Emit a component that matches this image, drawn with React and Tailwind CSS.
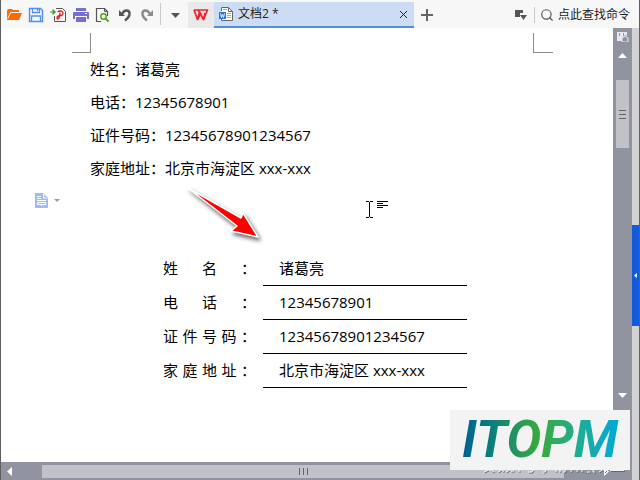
import { Search } from "lucide-react";

const fields = [
  { label: "姓名：", value: "诸葛亮" },
  { label: "电话：", value: "12345678901" },
  { label: "证件号码：", value: "12345678901234567" },
  { label: "家庭地址：", value: "北京市海淀区 xxx-xxx" },
];

const OpenIcon = () => (
  <svg width="16" height="16" viewBox="0 0 16 16" fill="#ff6a00">
    <path d="M1 13V4q0-2 2-2h3l1 1h5q1 0 1 1v1H5L2 10v3z" />
    <path d="M5 6h11l-3 7H1z" />
    <path d="M1.500 12L4.500 5.500h9" fill="none" stroke="#fff" strokeWidth=".6" />
  </svg>
);

const SaveIcon = () => (
  <svg width="16" height="16" viewBox="0 0 16 16" fill="none" stroke="#4f8df5">
    <path d="M1.500 1.500h11l2 2v11h-13z" strokeWidth="1.400" />
    <path d="M4.500 1.500v4h7v-4M3.500 14v-5h9v5" strokeWidth="1.300" />
    <path d="M9.500 2v2" strokeWidth="1.400" />
  </svg>
);

const PdfIcon = () => (
  <svg width="17" height="16" viewBox="0 0 17 16" fill="none">
    <path d="M6 1.500h6.500l3 3v10h-11V9" stroke="#555" />
    <path d="M0 5h4M3 2.500v5l2.500-2.500z" stroke="#4a9f1c" fill="#4a9f1c" />
    <path d="M7.500 4.500q5.500-1.500 5.500 1.500t-4 2.500M10 5.500q0 4-1 5.500-2 2-2 0t3-2.500" stroke="#e02020" strokeWidth="1.300" />
  </svg>
);

const PrintIcon = () => (
  <svg width="16" height="16" viewBox="0 0 16 16" fill="#766fd0">
    <path d="M3 1h10v3H3zM1 5h14q1 0 1 1v6h-2V9H2v3H0V6q0-1 1-1zM3 10h10v5H3z" />
    <path d="M12 6.500h2" stroke="#fff" />
  </svg>
);

const PreviewIcon = () => (
  <svg width="15" height="16" viewBox="0 0 15 16" fill="none">
    <path d="M6 14.500H1.500v-13h8l3 3V9" stroke="#555" strokeWidth="1.200" />
    <path d="M9.500 1.500v3h3" stroke="#555" />
    <circle cx="8.500" cy="9.500" r="2.700" stroke="#4a9f1c" strokeWidth="1.400" />
    <path d="M10.500 11.500l3 3" stroke="#4a9f1c" strokeWidth="1.800" />
  </svg>
);

const UndoIcon = ({ className }) => (
  <svg className={className} width="14" height="14" viewBox="0 0 14 14">
    <path d="M1 2v6h6z" fill="currentColor" />
    <path d="M4 6q2-4 5-3.500t2.500 4q-.5 3-4.500 6" fill="none" stroke="currentColor" strokeWidth="2.400" />
  </svg>
);

const WpsIcon = () => (
  <svg width="16" height="12" viewBox="0 0 16 12" fill="none" stroke="#f0202c" strokeWidth="1.700">
    <path d="M1 1h13.500l-4 9.500L6.500 3 4.500 10.500 1 1M5 1l5.500 9.500" strokeLinejoin="round" />
    <path d="M4.500 10.500L8 4M10.500 10.500L12 4" />
  </svg>
);

const DocIcon = () => (
  <svg width="14" height="14" viewBox="0 0 14 14" fill="none">
    <path d="M2.500 4V.500h7l4 4v9h-11V12" fill="#fff" stroke="#666" />
    <path d="M9.500.500v4h4" stroke="#666" />
    <path d="M8 6.500h4M8 8.500h4M8 10.500h4M4 2.500h4" stroke="#aaa" />
    <path d="M0 5h7v7H0z" fill="#1b78f2" />
    <path d="M1.500 6.500l1 4 1-3 1 3 1-4" stroke="#fff" strokeWidth=".9" />
  </svg>
);

const PasteIcon = () => (
  <svg width="13" height="15" viewBox="0 0 13 15" fill="none">
    <path d="M0 0h8l5 5v10H0z" fill="#9dbdf0" />
    <path d="M2 3.500h4M2 5.500h4M2 7.500h9M8.500 1v4H12M2.500 9.500h8v2h-8zM6.500 11v2" stroke="#fff" />
  </svg>
);

const RedArrow = () => (
  <svg className="absolute left-[180px] top-0 overflow-visible drop-shadow-[2px_3px_2px_rgba(0,0,0,0.6)]" width="84" height="58" viewBox="0 0 84 58">
    <path d="M7 3L60 33 62 28 77 52 50 46 56 41z" fill="#fe0000" stroke="#fff" strokeWidth="1.500" strokeLinejoin="round" />
  </svg>
);

const TextCursor = () => (
  <svg className="absolute left-[365px] top-4" width="24" height="18" viewBox="0 0 24 18" fill="none" stroke="#000">
    <path d="M0 .500h3M4 .500h3M0 16.500h3M4 16.500h3M3.500 1v15M11 .500h11M11 2.500h6M11 4.500h11M11 6.500h6" />
  </svg>
);

const Toolbar = () => (
  <header className="flex h-7 items-center bg-[#f7f7f7] text-xs text-[#222]">
    <div className="flex items-center gap-[6px] pl-[5px] pt-[2px]">
      <button aria-label="打开"><OpenIcon /></button>
      <button aria-label="保存"><SaveIcon /></button>
      <button aria-label="输出为PDF"><PdfIcon /></button>
      <button aria-label="打印"><PrintIcon /></button>
      <button aria-label="打印预览"><PreviewIcon /></button>
      <button aria-label="撤销" className="pl-[2px]"><UndoIcon className="text-[#555]" /></button>
      <button aria-label="恢复" className="pl-[2px]"><UndoIcon className="-scale-x-100 text-[#8a8a8a]" /></button>
    </div>
    <div className="ml-[6px] h-[22px] w-px bg-[#c8c8c8]" />
    <button aria-label="自定义" className="pl-[10px] pr-2 pt-[2px]">
      <svg width="9" height="5" viewBox="0 0 9 5" fill="#555"><path d="M0 0h9L4.500 5z" /></svg>
    </button>
    <div className="flex h-full pt-[2px]">
      <button aria-label="首页" className="flex w-[26px] items-center justify-center bg-[#e9e9e9]"><WpsIcon /></button>
      <div className="flex w-[200px] items-center border-b-2 border-[#4e8fe4] bg-[#ccdcf2] pl-[5px] pr-1">
        <DocIcon />
        <span className="ml-[5px] flex-1">文档2 *</span>
        <button aria-label="关闭" className="px-[2px]">
          <svg width="9" height="9" viewBox="0 0 9 9" stroke="#222"><path d="M1 1l7 7M8 1L1 8" /></svg>
        </button>
      </div>
      <button aria-label="新建" className="pl-[7px]">
        <svg width="12" height="12" viewBox="0 0 12 12" stroke="#666" strokeWidth="2"><path d="M6 0v12M0 6h12" /></svg>
      </button>
    </div>
    <div className="ml-auto flex h-full items-center pr-[9px] pt-[2px]">
      <button aria-label="窗口">
        <svg width="12" height="11" viewBox="0 0 12 11" fill="#555"><path d="M0 0h8v3H5v4H0zM5 5h7L8.500 10z" /></svg>
      </button>
      <div className="ml-[7px] mr-[5px] h-4 w-px bg-[#c8c8c8]" />
      <button className="flex items-center gap-1 whitespace-nowrap">
        <Search size={14} color="#555" />
        点此查找命令
      </button>
    </div>
  </header>
);

const Page = () => (
  <main className="flex-1 bg-white text-[15px] text-black">
    <div className="flex justify-between pl-[71px] pr-[60px] pt-[5px]">
      <div className="h-5 w-[19px] border-b border-r border-[#8c8c8c]" />
      <div className="h-5 w-5 border-b border-l border-[#8c8c8c]" />
    </div>

    <div className="pl-[89px] leading-[33px]">
      {fields.map((f) => (
        <p key={f.label}>{f.label}{f.value}</p>
      ))}
    </div>

    {/* paste options and pointer */}
    <div className="relative h-[66px] pl-[34px] pt-2">
      <button aria-label="粘贴选项" className="flex items-center gap-[6px]">
        <PasteIcon />
        <svg width="6" height="3" viewBox="0 0 6 3" fill="#999"><path d="M0 0h6L3 3z" /></svg>
      </button>
      <RedArrow />
      <TextCursor />
    </div>

    <table className="ml-[162px]">
      <tbody>
        {fields.map((f) => (
          <tr key={f.label} className="h-[34px]">
            <th scope="row" className="w-[100px] p-0 pr-[7px] font-normal [text-align-last:justify]">
              {f.label}
            </th>
            <td className="w-[204px] border-b border-black p-0 pl-4">{f.value}</td>
          </tr>
        ))}
      </tbody>
    </table>
  </main>
);

const VerticalScroll = () => (
  <div className="flex w-[19px] flex-col items-center bg-[#9194a0] pt-1">
    <svg width="12" height="10" viewBox="0 0 12 10" fill="#e8e8ee">
      <path d="M0 0h10v4L8 3 5 6v3H0z" />
      <path d="M2.500 1v3M6.500 1v3" stroke="#9194a0" />
      <path d="M5 6l3-2 3 2v4H5z" fill="none" stroke="#e8e8ee" />
    </svg>
    <button aria-label="向上" className="mt-[11px]">
      <svg width="9" height="5" viewBox="0 0 9 5" fill="#fff"><path d="M0 5h9L4.500 0z" /></svg>
    </button>
    <div className="mt-[22px] flex h-[68px] w-[13px] flex-col items-center justify-center gap-[3px] bg-[#c1c1ca]">
      <div className="h-px w-[7px] bg-[#666]" />
      <div className="h-px w-[7px] bg-[#666]" />
      <div className="h-px w-[7px] bg-[#666]" />
    </div>
    <button aria-label="向下" className="mb-[64px] mt-auto">
      <svg width="9" height="5" viewBox="0 0 9 5" fill="#fff"><path d="M0 0h9L4.500 5z" /></svg>
    </button>
  </div>
);

const HorizontalScroll = () => (
  <div className="flex h-[18px] items-center bg-[#9194a0] pl-[6px] pr-[23px]">
    <button aria-label="向左">
      <svg width="5" height="9" viewBox="0 0 5 9" fill="#fff"><path d="M5 0v9L0 4.500z" /></svg>
    </button>
    <div className="ml-[30px] mr-10 flex h-[13px] flex-1 items-center justify-center gap-[3px] bg-[#c1c1ca]">
      <div className="h-[7px] w-px bg-[#666]" />
      <div className="h-[7px] w-px bg-[#666]" />
      <div className="h-[7px] w-px bg-[#666]" />
    </div>
    <button aria-label="向右">
      <svg width="5" height="9" viewBox="0 0 5 9" fill="#fff"><path d="M0 0v9l5-4.500z" /></svg>
    </button>
  </div>
);

export default function App() {
  return (
    <div className="relative flex min-h-screen flex-col border-x border-[#5f5f5f] font-['Open_Sans','Noto_Sans_CJK_SC',sans-serif]">
      <Toolbar />
      <div className="flex flex-1">
        <div className="flex flex-1 flex-col">
          <div className="flex flex-1">
            <Page />
            <VerticalScroll />
          </div>
          <HorizontalScroll />
        </div>
        <aside className="w-[7px] bg-[#d3d3d5] pt-[197px]">
          <button aria-label="展开任务窗格" className="flex h-[101px] w-full items-center justify-center bg-[#125cdc]">
            <svg width="3" height="5" viewBox="0 0 3 5" fill="#fff"><path d="M3 0v5L0 2.500z" /></svg>
          </button>
        </aside>
      </div>

      {/* logo plate with worn marks along its lower edge */}
      <div className="absolute bottom-[10px] right-[9px] flex h-[60px] w-[180px] items-center justify-center bg-[#f3f3f3]">
        <span className="bg-linear-to-r from-[#005b96] via-[#3aaa35] to-[#00a8e0] bg-clip-text px-1 font-['Roboto',sans-serif] text-[52px] font-bold italic leading-[60px] text-transparent">
          ITOPM
        </span>
        <svg className="absolute right-1 top-full drop-shadow-[1px_1px_0_#666]" width="146" height="4" viewBox="0 0 146 4" fill="none" stroke="#f3f3f3">
          <path d="M4 2l4-2M10 0l4 2M18 2l3-2M23 0v2M26 2l3-2M31 1h3M39 0v2M48 2h4l1-2M66 0l-1 2h-2M76 0v2M80 0v2M83 2h2V0M91 0v2M97 0v2M102 0v2M107 2h3M113 0v2h2M119 2l3-2M124 2l2-2" />
          <path d="M130 .500h14" />
        </svg>
      </div>
    </div>
  );
}
